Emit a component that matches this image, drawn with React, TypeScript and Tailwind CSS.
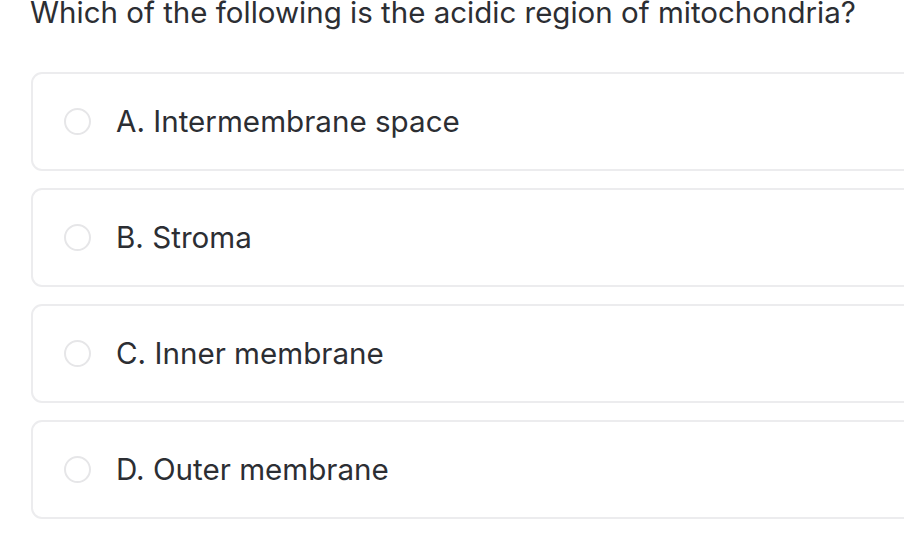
const options = [
  'A. Intermembrane space',
  'B. Stroma',
  'C. Inner membrane',
  'D. Outer membrane',
];

export default function App() {
  return (
    <div className="bg-white w-[904px] h-[536px] overflow-hidden text-[#2c2e33] font-['Inter',sans-serif]">
      <h1 className="-mt-[6px] pl-[30px] text-[29.5px] leading-[36px] font-normal whitespace-nowrap">
        Which of the following is the acidic region of mitochondria?
      </h1>
      <div className="mt-[42px] ml-[31px] flex flex-col gap-[17px]">
        {options.map((o) => (
          <div
            key={o}
            className="w-[900px] h-[99px] rounded-[11px] border-2 border-[#ececee] flex items-center pl-[31px]"
          >
            <span className="w-[27px] h-[27px] rounded-full border-2 border-[#e6e6e8] shrink-0" />
            <span className="ml-[25px] text-[29.6px] whitespace-nowrap">{o}</span>
          </div>
        ))}
      </div>
    </div>
  );
}
